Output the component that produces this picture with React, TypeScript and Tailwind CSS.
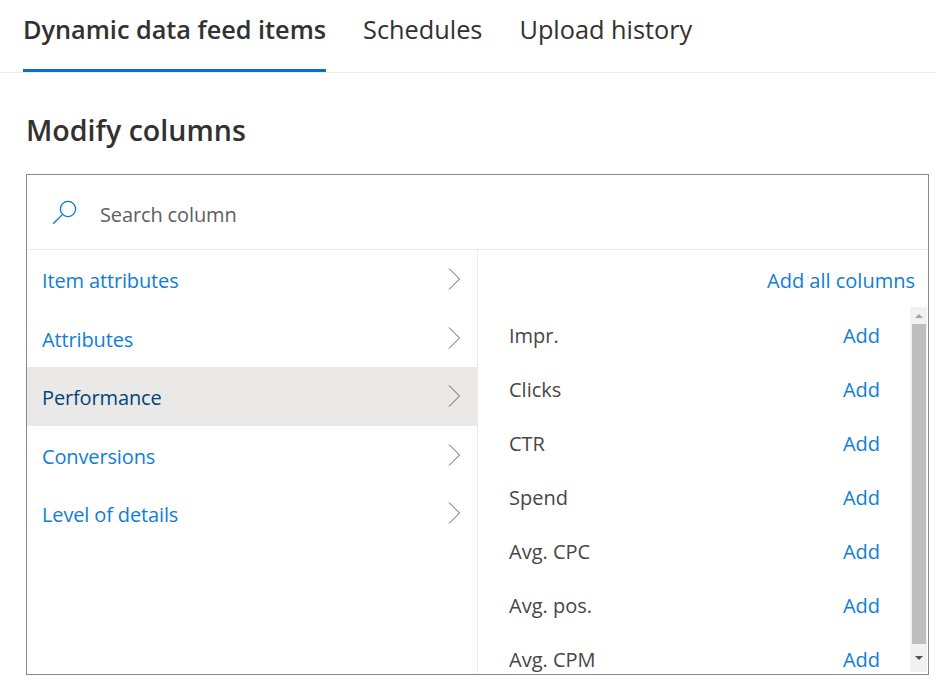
const font = { fontFamily: '"Open Sans", "Noto Sans", sans-serif' };

const tabs = ['Dynamic data feed items', 'Schedules', 'Upload history'];
const categories = ['Item attributes', 'Attributes', 'Performance', 'Conversions', 'Level of details'];
const columns = ['Impr.', 'Clicks', 'CTR', 'Spend', 'Avg. CPC', 'Avg. pos.', 'Avg. CPM'];

function Chevron() {
  return (
    <svg width="14" height="24" viewBox="0 0 14 24" fill="none" stroke="#605e5c" strokeWidth="1">
      <path d="M1 1.5 L11.5 12 L1 22.5" />
    </svg>
  );
}

function SearchIcon() {
  return (
    <svg width="26" height="26" viewBox="0 0 26 26" fill="none" stroke="#0078d4" strokeWidth="1.3">
      <circle cx="16" cy="10" r="7.6" />
      <path d="M10.6 15.4 L1.2 24.8" />
    </svg>
  );
}

export default function App() {
  return (
    <div className="h-[684px] w-[936px] overflow-hidden bg-white text-[#323130]" style={font}>
      <div className="flex h-[73px] gap-[37px] border-b border-[#edebe9] pl-[23px]">
        {tabs.map((tab, i) => (
          <div
            key={tab}
            className={`h-[72px] pt-[11px] text-[25.3px] leading-[36px] ${
              i === 0 ? 'border-b-[3px] border-[#0b6fc4] font-semibold tracking-[-0.02px]' : ''
            }`}
          >
            {tab}
          </div>
        ))}
      </div>

      <h1 className="ml-[26px] mt-[37px] h-[64px] text-[28.6px] leading-[40px] font-semibold">
        Modify columns
      </h1>

      <div className="ml-[26px] flex h-[501px] w-[903px] flex-col border border-[#8a8886]">
        <div className="flex h-[75px] items-center border-b border-[#edebe9] pl-[25px]">
          <SearchIcon />
          <span className="ml-[22px] pt-[6px] text-[20px] tracking-[-0.13px] text-[#605e5c]">Search column</span>
        </div>

        <div className="flex min-h-0 flex-1">
          <div className="w-[451px] border-r border-[#edebe9]">
            {categories.map((name) => (
              <div
                key={name}
                className={`flex h-[58.5px] items-center justify-between pl-[15px] pr-[15px] text-[20px] tracking-[-0.14px] ${
                  name === 'Performance' ? 'bg-[#ebe9e7] text-[#004578]' : 'text-[#0f7ed6]'
                }`}
              >
                <span className="pt-[4px]">{name}</span>
                <Chevron />
              </div>
            ))}
          </div>

          <div className="relative min-w-0 flex-1 overflow-hidden">
            <div className="flex h-[57px] items-center justify-end pr-[13px] pt-[4px] text-[20px] text-[#0f7ed6]">
              Add all columns
            </div>
            {columns.map((name) => (
              <div key={name} className="flex h-[54px] items-center justify-between pl-[31px] pr-[48px] pt-[4px] text-[20px]">
                <span className="text-[#484644]">{name}</span>
                <span className="text-[#0f7ed6]">Add</span>
              </div>
            ))}

            <div className="absolute right-[1px] top-[57px] flex h-[365px] w-[17px] flex-col items-center bg-[#f1f1f1]">
              <div className="flex h-[17px] items-center justify-center">
                <div className="h-0 w-0 border-x-[4px] border-b-[4px] border-x-transparent border-b-[#a3a3a3]" />
              </div>
              <div className="ml-[1px] h-[320px] w-[14px] bg-[#bebebe]" />
              <div className="flex flex-1 items-center justify-center">
                <div className="h-0 w-0 border-x-[4px] border-t-[4px] border-x-transparent border-t-[#505050]" />
              </div>
            </div>
          </div>
        </div>
      </div>
    </div>
  );
}
